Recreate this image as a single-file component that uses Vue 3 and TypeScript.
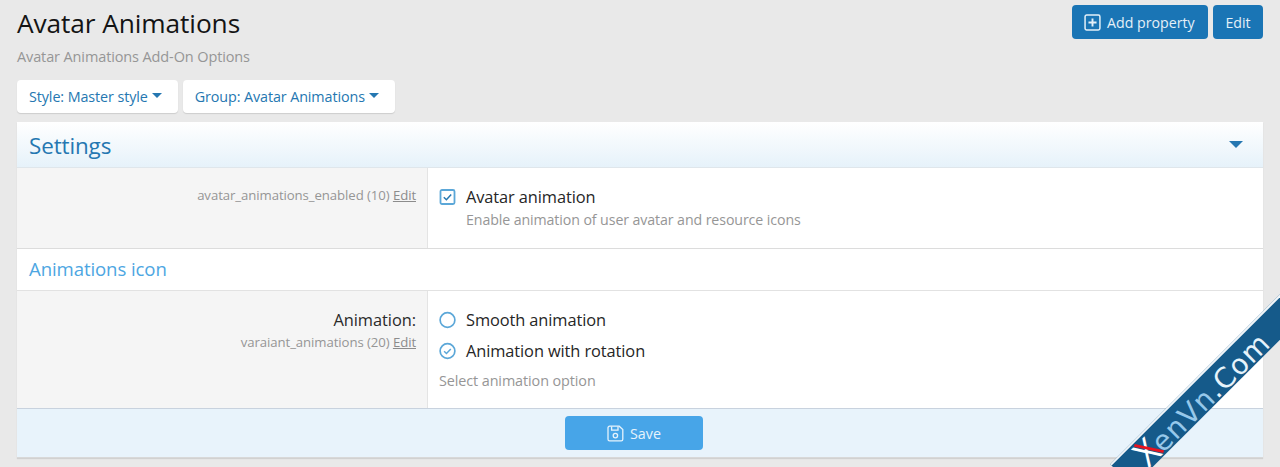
<script setup lang="ts">
const radios = [
  { label: 'Smooth animation', checked: false },
  { label: 'Animation with rotation', checked: true },
]
</script>

<template>
  <div class="page">
    <header class="head">
      <div>
        <h1 class="title">Avatar Animations</h1>
        <p class="subtitle">Avatar Animations Add-On Options</p>
      </div>
      <div class="actions">
        <button class="btn">
          <svg width="17" height="17" viewBox="0 0 16 16" fill="none" stroke="currentColor" stroke-width="1.4">
            <rect x="1" y="1" width="14" height="14" rx="1.5" />
            <path d="M8 4.2v7.6M4.2 8h7.6" stroke-width="1.8" />
          </svg>
          Add property
        </button>
        <button class="btn edit">Edit</button>
      </div>
    </header>

    <nav class="filters">
      <button class="filter">Style: Master style <i class="caret"></i></button>
      <button class="filter">Group: Avatar Animations <i class="caret"></i></button>
    </nav>

    <section class="card">
      <div class="card-head">
        <h2>Settings</h2>
        <i class="caret big"></i>
      </div>

      <div class="row first">
        <div class="label">
          <div class="hint">avatar_animations_enabled (10) <u>Edit</u></div>
        </div>
        <div class="control">
          <div class="option">
            <svg class="mark" width="16" height="16" viewBox="0 0 16 16" fill="none">
              <rect x="1" y="1" width="14" height="14" rx="1.5" stroke="#5ba7d8" stroke-width="1.8" />
              <path d="M4.3 8.2l2.6 2.5 4.8-5.2" stroke="#2577b1" stroke-width="1.5" />
            </svg>
            <span>Avatar animation</span>
          </div>
          <p class="desc">Enable animation of user avatar and resource icons</p>
        </div>
      </div>

      <h3 class="section">Animations icon</h3>

      <div class="row second">
        <div class="label">
          <div class="name">Animation:</div>
          <div class="hint">varaiant_animations (20) <u>Edit</u></div>
        </div>
        <div class="control">
          <div v-for="r in radios" :key="r.label" class="option radio">
            <svg class="mark" width="18" height="18" viewBox="0 0 18 18" fill="none">
              <circle cx="9" cy="9" r="7.8" stroke="#5ba7d8" stroke-width="1.8" />
              <path v-if="r.checked" d="M5.4 9.3l2.5 2.4 4.6-4.8" stroke="#5ba7d8" stroke-width="1.6" />
            </svg>
            <span>{{ r.label }}</span>
          </div>
          <p class="desc last">Select animation option</p>
        </div>
      </div>

      <footer class="foot">
        <button class="save">
          <svg width="17" height="17" viewBox="0 0 17 17" fill="none" stroke="currentColor" stroke-width="1.3">
            <path d="M2.6 1.2h9.6l3.6 3.4v9.6a1.6 1.6 0 0 1-1.6 1.6H2.6A1.6 1.6 0 0 1 1 14.2V2.8a1.6 1.6 0 0 1 1.6-1.6z" />
            <path d="M4.6 1.4v3.8h6.4V1.4" />
            <circle cx="8.4" cy="10.6" r="2.2" />
          </svg>
          Save
        </button>
      </footer>
    </section>

    <div class="ribbon"><span class="x">X</span><span class="en">enVn</span><span class="com">.Com</span></div>
    <i class="bar"></i>
  </div>
</template>

<style>
html, body { margin: 0; background: #e9e9e9; }
</style>

<style scoped>
.page {
  position: relative;
  box-sizing: border-box;
  width: 1280px;
  height: 467px;
  padding: 5px 17px 0;
  overflow: hidden;
  background: #e9e9e9;
  font-family: "Open Sans", "Noto Sans", sans-serif;
  font-size: 14px;
  color: #141414;
}
.head { display: flex; justify-content: space-between; align-items: flex-start; height: 75px; }
.title { margin: 0; font-size: 26.3px; line-height: 36px; font-weight: 400; letter-spacing: -.1px; }
.subtitle { margin: 6px 0 0; font-size: 14.5px; line-height: 20px; color: #969696; letter-spacing: -.12px; }
.actions { display: flex; gap: 5px; }
.btn {
  display: flex; align-items: center; gap: 6px;
  height: 34px; width: 136px; padding: 0 0 0 12px;
  border: 0; border-radius: 4px;
  background: #1a75b5; color: #e4f0f8;
  font: inherit; font-size: 14.2px;
}
.edit { width: 50px; justify-content: center; padding: 0; }
.btn svg { flex: none; }
.filters { display: flex; gap: 5px; height: 42px; align-items: flex-start; }
.filter {
  height: 33px; padding: 0 16px 0 12px;
  display: flex; align-items: center; gap: 4px;
  border: 0; border-radius: 4px;
  background: #fff; color: #2577b1;
  box-shadow: 0 1px 1px rgba(0,0,0,.12);
  font: inherit; font-size: 14.35px; letter-spacing: -.1px;
}
.caret {
  display: inline-block; width: 0; height: 0;
  border-left: 5px solid transparent; border-right: 5px solid transparent;
  border-top: 5px solid #2577b1;
  margin-bottom: 2px;
}
.caret.big { border-left-width: 7px; border-right-width: 7px; border-top-width: 7px; margin: 0; }
.card {
  background: #fff;
  box-shadow: 0 1px 1px rgba(0,0,0,.1);
}
.card-head {
  display: flex; justify-content: space-between; align-items: center;
  height: 45px; padding: 0 20px 0 12px;
  background: linear-gradient(180deg, #ffffff 0%, #e6f2fa 100%);
  border-bottom: 1px solid #dfe6eb;
  box-sizing: content-box;
}
.card-head h2 { margin: 2px 0 0; font-size: 22.4px; font-weight: 400; color: #2577b1; letter-spacing: -.1px; }
.row { display: grid; grid-template-columns: 411px 1fr; border-bottom: 1px solid #dcdcdc; }
.row.first { height: 80px; }
.row.second { height: 117px; border-bottom-color: #c8d2de; }
.label {
  background: #f5f5f5; border-right: 1px solid #e4e4e4;
  padding: 18px 11px 0 0; text-align: right;
}
.name { font-size: 16.4px; line-height: 22px; color: #2a2a2a; letter-spacing: -.05px; }
.hint { font-size: 13.2px; line-height: 18px; color: #969696; letter-spacing: -.08px; }
.second .hint { margin-top: 2px; }
.hint u { color: #8c8c8c; }
.control { padding: 18px 12px 0 11px; }
.option { display: flex; align-items: center; gap: 10px; font-size: 16.4px; line-height: 22px; letter-spacing: -.1px; color: #262626; }
.option.radio { height: 22px; margin-bottom: 9px; }
.mark { flex: none; width: 17px; }
.desc { margin: 2px 0 0 27px; font-size: 14.2px; line-height: 20px; color: #969696; letter-spacing: -.1px; }
.desc.last { margin: 9px 0 0 0; font-size: 14.4px; }
.section {
  margin: 0; padding: 0 12px;
  height: 41px; line-height: 39px;
  border-bottom: 1px solid #e2e2e2;
  font-size: 18.6px; font-weight: 400; color: #4da6e2; letter-spacing: -.1px;
}
.foot {
  display: flex; justify-content: center;
  height: 49px; padding: 7px 12px 0 0;
  box-sizing: border-box;
  background: #e8f3fb;
  border-bottom: 1px solid #d8d8d8;
}
.save {
  display: flex; align-items: center; justify-content: center; gap: 6px;
  width: 138px; height: 34px;
  border: 0; border-radius: 4px;
  background: #47a5e8; color: #e6f3fc;
  font: inherit; font-size: 14.3px;
}
.ribbon {
  position: absolute;
  left: 1077px; top: 352px;
  width: 280px; height: 30px;
  transform: rotate(-45deg);
  transform-origin: center;
  background: #155a8a;
  border-top: 2px solid #f2f6f9;
  padding-left: 24px;
  box-sizing: content-box;
  font-family: "DejaVu Sans", sans-serif;
  font-size: 28px; line-height: 33px;
  letter-spacing: 1.2px;
  white-space: nowrap;
  pointer-events: none;
}
.x { color: #fff; font-family: "Open Sans", sans-serif; font-size: 36px; line-height: 30px; letter-spacing: 0; }
.en { color: #96c8ea; }
.com { color: #e6f3fb; }
.bar {
  position: absolute;
  left: 1134px; top: 447px;
  width: 30px; height: 3px;
  background: #e8131f;
  transform: rotate(12deg);
}
</style>
